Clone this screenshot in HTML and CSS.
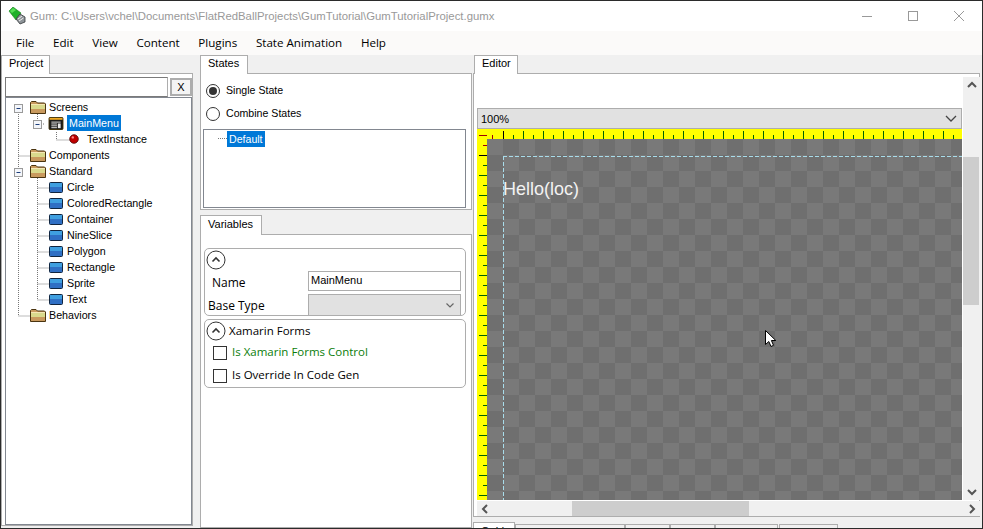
FILE: index.html
```html
<!DOCTYPE html>
<html>
<head>
    <title>Gum</title>
    <link rel="stylesheet" href="styles.css">
</head>
<body>
<svg class="defs" width="0" height="0">
    <symbol id="folder" viewBox="0 0 16 13">
        <path d="M.5 12.5V1.5L1.5.5H6L7.5 2H14.5L15.500 3V12.500Z" fill="#c99a5e" stroke="#4a3410"/>
        <rect x="1" y="4" width="14" height="4" fill="#d9d98c"/>
        <rect x="1" y="3" width="14" height="1" fill="#f5e7b5"/>
    </symbol>
    <symbol id="comp" viewBox="0 0 14 11">
        <rect x=".5" y=".5" width="13" height="10" rx="1" fill="#2f6fc4" stroke="#10253f"/>
        <rect x="1" y="1" width="12" height="4" fill="#3f9fe0"/>
    </symbol>
</svg>
<div class="window">
    <header class="titlebar">
        <svg class="appicon" width="18" height="18" viewBox="0 0 18 18">
            <path d="M1 4L5 0L13 6L8 13Z" fill="#1fb02a" stroke="#12801a" stroke-width=".6"/>
            <path d="M2 4L5 1L8 3L4 6Z" fill="#55dd55"/>
            <path d="M8 12L12 7L17 10V15L12 17Z" fill="#8e9499" stroke="#33373a" stroke-width=".8"/>
            <path d="M10 12L14 9M11 14L15.500 11" stroke="#eee"/>
        </svg>
        <span class="apptitle">Gum: C:\Users\vchel\Documents\FlatRedBallProjects\GumTutorial\GumTutorialProject.gumx</span>
        <div class="winbtns">
            <svg width="46" height="30" viewBox="0 0 46 30"><path d="M18 15.500H28" stroke="#999"/></svg>
            <svg width="46" height="30" viewBox="0 0 46 30"><rect x="18.500" y="10.500" width="9" height="9" fill="none" stroke="#999"/></svg>
            <svg width="46" height="30" viewBox="0 0 46 30"><path d="M18 10L28 20M28 10L18 20" stroke="#999" fill="none"/></svg>
        </div>
    </header>
    <nav class="menubar">
        <span>File</span><span>Edit</span><span>View</span><span>Content</span><span>Plugins</span><span>State Animation</span><span>Help</span>
    </nav>
    <main class="workspace">
        <section class="col col-project">
            <div class="tabs"><div class="tab tab-project">Project</div></div>
            <div class="panel project-panel">
                <div class="searchrow">
                    <div class="searchbox"></div>
                    <div class="xbtn">X</div>
                </div>
                <div class="tree">
                    <svg class="treelines" width="80" height="230" viewBox="0 0 80 230">
                        <path d="M12.500 10V218M12.500 218H24M12.500 58H24M31.500 16V22M35 26H38M50.500 34V42H64" class="dots"/>
                        <path d="M31.500 78V202M31.500 90H44M31.500 106H44M31.500 122H44M31.500 138H44M31.500 154H44M31.500 170H44M31.500 186H44M31.500 202H44" class="dots"/>
                        <g class="expander">
                            <rect x="8.500" y="6.500" width="8" height="8"/><path d="M10.500 10.500H14.500"/>
                            <rect x="8.500" y="70.500" width="8" height="8"/><path d="M10.500 74.500H14.500"/>
                            <rect x="27.500" y="22.500" width="8" height="8"/><path d="M29.500 26.500H33.500"/>
                        </g>
                    </svg>
                    <div class="node lvl0"><svg class="ficon"><use href="#folder"/></svg><span>Screens</span></div>
                    <div class="node lvl1">
                        <svg class="ficon" viewBox="0 0 16 14">
                            <rect x=".5" y=".5" width="15" height="13" rx="1" fill="#1c1c1c" stroke="#3a2a00"/>
                            <rect x="1" y="1" width="14" height="2" fill="#f0a820"/>
                            <path d="M3 5.500H13M3 7.500H9M3 9.500H9M3 11.500H9" stroke="#e8e8e8"/>
                            <rect x="10" y="7" width="3" height="5" fill="#e8e8e8"/>
                        </svg>
                        <span class="selected">MainMenu</span>
                    </div>
                    <div class="node lvl2">
                        <svg class="ball" width="10" height="10" viewBox="0 0 10 10">
                            <circle cx="5" cy="5" r="4.300" fill="#c00000" stroke="#4d0505" stroke-width=".8"/>
                            <circle cx="3.800" cy="3.400" r="1.200" fill="#ff8a8a"/>
                        </svg>
                        <span>TextInstance</span>
                    </div>
                    <div class="node lvl0"><svg class="ficon"><use href="#folder"/></svg><span>Components</span></div>
                    <div class="node lvl0"><svg class="ficon"><use href="#folder"/></svg><span>Standard</span></div>
                    <div class="node lvl1b"><svg class="cicon"><use href="#comp"/></svg><span>Circle</span></div>
                    <div class="node lvl1b"><svg class="cicon"><use href="#comp"/></svg><span>ColoredRectangle</span></div>
                    <div class="node lvl1b"><svg class="cicon"><use href="#comp"/></svg><span>Container</span></div>
                    <div class="node lvl1b"><svg class="cicon"><use href="#comp"/></svg><span>NineSlice</span></div>
                    <div class="node lvl1b"><svg class="cicon"><use href="#comp"/></svg><span>Polygon</span></div>
                    <div class="node lvl1b"><svg class="cicon"><use href="#comp"/></svg><span>Rectangle</span></div>
                    <div class="node lvl1b"><svg class="cicon"><use href="#comp"/></svg><span>Sprite</span></div>
                    <div class="node lvl1b"><svg class="cicon"><use href="#comp"/></svg><span>Text</span></div>
                    <div class="node lvl0"><svg class="ficon"><use href="#folder"/></svg><span>Behaviors</span></div>
                </div>
            </div>
        </section>

        <section class="col col-middle">
            <div class="tabs"><div class="tab tab-states">States</div></div>
            <div class="panel states-panel">
                <label class="radio"><i class="dot on"></i>Single State</label>
                <label class="radio"><i class="dot"></i>Combine States</label>
                <div class="statetree">
                    <i class="statedots"></i><span class="selected">Default</span>
                </div>
            </div>
            <div class="tabs tabs-vars"><div class="tab tab-vars">Variables</div></div>
            <div class="panel vars-panel">
                <div class="group group-main">
                    <div class="collapse"><svg class="chev" width="20" height="20" viewBox="0 0 20 20"><circle cx="10" cy="10" r="9" fill="none" stroke="#333"/><path d="M6.500 11.500L10 8L13.500 11.500" fill="none" stroke="#333" stroke-width="1.600"/></svg></div>
                    <div class="field field-name"><span>Name</span><div class="input">MainMenu</div></div>
                    <div class="field field-base"><span>Base Type</span><div class="combo"><svg width="8" height="5" viewBox="0 0 8 5"><path d="M.5 .5L4 4L7.500 .5" fill="none" stroke="#666" stroke-width="1.200"/></svg></div></div>
                </div>
                <div class="group group-forms">
                    <div class="collapse"><svg class="chev" width="20" height="20" viewBox="0 0 20 20"><circle cx="10" cy="10" r="9" fill="none" stroke="#333"/><path d="M6.500 11.500L10 8L13.500 11.500" fill="none" stroke="#333" stroke-width="1.600"/></svg><span>Xamarin Forms</span></div>
                    <label class="check green"><i></i>Is Xamarin Forms Control</label>
                    <label class="check"><i></i>Is Override In Code Gen</label>
                </div>
            </div>
        </section>

        <section class="col col-editor">
            <div class="tabs"><div class="tab tab-editor">Editor</div></div>
            <div class="panel editor-panel">
                <div class="editor-grid">
                    <div class="editor-main">
                        <div class="zoombar"><span>100%</span><svg width="12" height="7" viewBox="0 0 12 7"><path d="M1 1L6 6L11 1" fill="none" stroke="#444" stroke-width="1.300"/></svg></div>
                        <div class="rulertop"></div>
                        <div class="canvasrow">
                            <div class="rulerleft"></div>
                            <div class="canvas">
                                <div class="bounds"></div>
                                <div class="hello">Hello(loc)</div>
                                <svg class="cursor" width="14" height="20" viewBox="0 0 14 20"><path d="M1.500 1.500V15.500L4.800 12.500L7 17.500L9.500 16.300L7.400 11.500H11.800Z" fill="#fff" stroke="#000"/></svg>
                            </div>
                        </div>
                    </div>
                    <div class="vscroll">
                        <svg width="16" height="16" viewBox="0 0 16 16"><path d="M4 10L8 6L12 10" fill="none" stroke="#555" stroke-width="2"/></svg>
                        <div class="vtrack"><div class="vthumb"></div></div>
                        <svg width="16" height="16" viewBox="0 0 16 16"><path d="M4 6L8 10L12 6" fill="none" stroke="#555" stroke-width="2"/></svg>
                    </div>
                    <div class="hscroll">
                        <svg width="16" height="16" viewBox="0 0 16 16"><path d="M10 4L6 8L10 12" fill="none" stroke="#555" stroke-width="2"/></svg>
                        <div class="htrack"><div class="hthumb"></div></div>
                        <svg width="16" height="16" viewBox="0 0 16 16"><path d="M6 4L10 8L6 12" fill="none" stroke="#555" stroke-width="2"/></svg>
                    </div>
                </div>
            </div>
            <div class="bottomtabs">
                <div class="btab btab-on">Guides</div>
                <div class="btab btab-a"></div>
                <div class="btab btab-b"></div>
                <div class="btab btab-b"></div>
                <div class="btab btab-c"></div>
                <div class="btab btab-d"></div>
            </div>
        </section>
    </main>
</div>
</body>
</html>
```

FILE: styles.css
```css
* {
    box-sizing: border-box;
}

html, body {
    margin: 0;
    padding: 0;
    background-color: #f0f0f0;
}

body {
    font-family: "Liberation Sans", Arial, sans-serif;
    font-size: 11px;
    color: #000;
}

.defs {
    display: block;
    height: 0;
}

.window {
    width: 983px;
    height: 529px;
    border: 1px solid #2b2b2b;
    overflow: hidden;
    display: flex;
    flex-direction: column;
    background-color: #f0f0f0;
}

.titlebar {
    height: 30px;
    background-color: #fff;
    display: flex;
    align-items: center;
    flex-shrink: 0;
}

.appicon {
    margin-left: 7px;
}

.apptitle {
    margin-left: 4px;
    color: #999;
    font-size: 11.35px;
    white-space: nowrap;
    flex: 1;
}

.winbtns {
    display: flex;
    height: 30px;
}

.winbtns svg {
    display: block;
}

.menubar {
    height: 24px;
    background-color: #fbfaf9;
    display: flex;
    align-items: center;
    padding: 0 0 2px 15px;
    gap: 18.7px;
    flex-shrink: 0;
    font-family: "Open Sans", sans-serif;
    font-size: 11.6px;
}

.workspace {
    flex: 1;
    display: grid;
    grid-template-columns: 191px 281px 1fr;
    min-height: 0;
}

.col {
    display: flex;
    flex-direction: column;
    min-width: 0;
    min-height: 0;
}

.tabs {
    height: 18px;
    display: flex;
    flex-shrink: 0;
}

.tab {
    height: 19px;
    background-color: #fff;
    border: 1px solid #adadad;
    border-bottom: none;
    padding: 0 0 0 7px;
    line-height: 15px;
    position: relative;
    z-index: 1;
}

.panel {
    background-color: #fff;
    border: 1px solid #adadad;
}

/* project column */
.tab-project {
    width: 49px;
}

.project-panel {
    height: 453px;
    padding: 3px 0 0 3px;
    width: 192px;
}

.searchrow {
    display: flex;
    height: 20px;
}

.searchbox {
    width: 163px;
    height: 20px;
    border: 1px solid #7a7a7a;
    border-right-color: #adadad;
}

.xbtn {
    width: 22px;
    height: 18px;
    margin: 1px 0 0 2px;
    border: 2px solid #adadad;
    background-color: #f4f4f4;
    text-align: center;
    line-height: 14px;
}

.tree {
    position: relative;
    width: 187px;
    height: 428px;
    border: 1px solid #828790;
    padding-top: 1px;
    font-size: 10.7px;
}

.treelines {
    position: absolute;
    left: 0;
    top: 0;
}

.dots {
    fill: none;
    stroke: #777;
    stroke-dasharray: 1 1;
}

.expander rect {
    fill: #f4f6fa;
    stroke: #9a9a9a;
}

.expander path {
    stroke: #1c3d7a;
}

.node {
    position: relative;
    height: 16px;
    display: flex;
    align-items: center;
    white-space: nowrap;
}

.ficon {
    width: 16px;
    height: 13px;
    flex-shrink: 0;
}

.cicon {
    width: 14px;
    height: 11px;
    flex-shrink: 0;
}

.lvl0 {
    padding-left: 24px;
}

.lvl0 span {
    margin-left: 3px;
}

.lvl1 {
    padding-left: 42px;
}

.lvl1 span {
    margin-left: 3px;
}

.lvl2 {
    padding-left: 63px;
}

.lvl2 span {
    margin-left: 8px;
}

.lvl1b {
    padding-left: 43px;
}

.lvl1b span {
    margin-left: 4px;
}

.selected {
    background-color: #0078d7;
    color: #fff;
    padding: 0 2px;
    height: 16px;
    line-height: 16px;
    display: inline-block;
}

/* middle column */
.col-middle {
    padding-left: 8px;
    padding-right: 1px;
}

.tab-states {
    width: 48px;
}

.states-panel {
    height: 137px;
    padding: 4px 5px 0 2px;
}

.radio {
    display: flex;
    align-items: center;
    height: 23px;
    padding-left: 3px;
    font-size: 10.6px;
}

.dot {
    width: 14px;
    height: 14px;
    margin-top: 2px;
    border: 1px solid #333;
    border-radius: 50%;
    margin-right: 6px;
    background-color: #fff;
    display: flex;
    align-items: center;
    justify-content: center;
}

.dot.on::after {
    content: "";
    width: 8px;
    height: 8px;
    background-color: #333;
    border-radius: 50%;
}

.statetree {
    height: 79px;
    margin-top: 5px;
    border: 1px solid #828790;
    display: flex;
    align-items: flex-start;
    padding: 1px 0 0 14px;
    font-size: 10.6px;
}

.statedots {
    width: 9px;
    height: 8px;
    border-bottom: 1px dotted #777;
}

.tabs-vars {
    margin-top: 5px;
    height: 19px;
}

.tab-vars {
    width: 62px;
    height: 20px;
    line-height: 17px;
}

.vars-panel {
    flex: 1;
    padding: 13px 5px 0 3px;
    font-family: "Open Sans", sans-serif;
    font-size: 11.5px;
}

.group {
    border: 1px solid #adadad;
    border-radius: 5px;
}

.group-main {
    height: 68px;
    padding: 1px;
}

.group-forms {
    height: 69px;
    margin-top: 3px;
    padding: 1px;
}

.collapse {
    height: 20px;
    display: flex;
    align-items: center;
}

.chev {
    flex-shrink: 0;
}

.collapse span {
    margin-left: 3px;
    padding-bottom: 2px;
}

.field {
    display: flex;
    align-items: center;
}

.field span {
    display: block;
    font-size: 12px;
}

.field-name {
    height: 21px;
    padding-left: 6px;
}

.field-name span {
    width: 96px;
    padding-top: 3px;
}

.field-base {
    height: 22px;
    padding-left: 2px;
    margin-top: 3px;
}

.field-base span {
    width: 100px;
}

.input {
    width: 153px;
    height: 20px;
    border: 1px solid #adadad;
    padding-left: 2px;
    line-height: 17px;
    font-family: "Liberation Sans", sans-serif;
    font-size: 11px;
}

.combo {
    width: 153px;
    height: 22px;
    background-color: #e1e1e1;
    border: 1px solid #adadad;
    display: flex;
    align-items: center;
    justify-content: flex-end;
    padding-right: 6px;
}

.check {
    display: flex;
    align-items: center;
    height: 23px;
    padding: 0 0 2px 7px;
}

.check i {
    width: 14px;
    height: 14px;
    margin-top: 2px;
    border: 1px solid #333;
    margin-right: 5px;
    background-color: #fff;
}

.green {
    color: #0a7d0a;
}

/* editor column */
.tab-editor {
    width: 44px;
    margin-left: 1px;
}

.editor-panel {
    width: 507px;
    height: 445px;
    padding: 3px 0 0 3px;
}

.editor-grid {
    display: grid;
    grid-template-columns: 485px 17px;
    grid-template-rows: 423px 16px;
    column-gap: 1px;
}

.editor-main {
    padding-top: 31px;
    min-height: 0;
    overflow: hidden;
}

.zoombar {
    height: 21px;
    background-color: #e1e1e1;
    border: 1px solid #adadad;
    display: flex;
    align-items: center;
    justify-content: space-between;
    padding: 0 4px 0 3px;
}

.rulertop {
    height: 10px;
    background-color: #ff0;
    background-image:
        linear-gradient(to right, #000, #000),
        repeating-linear-gradient(to right, #006400 0 1px, transparent 1px 20px),
        repeating-linear-gradient(to right, #006400 0 1px, transparent 1px 20px),
        linear-gradient(to right, #a00000, #a00000),
        linear-gradient(to right, #a00000, #a00000);
    background-size: 1px 8px, 500px 8px, 500px 4px, 1px 4px, 8px 1px;
    background-position: 26px bottom, 46px bottom, 36px bottom, 15px bottom, 2px 6px;
    background-repeat: no-repeat;
}

.canvasrow {
    display: flex;
    height: 361px;
}

.rulerleft {
    width: 10px;
    background-color: #ff0;
    background-image:
        linear-gradient(#000, #000),
        repeating-linear-gradient(to bottom, #006400 0 1px, transparent 1px 20px),
        repeating-linear-gradient(to bottom, #006400 0 1px, transparent 1px 20px),
        linear-gradient(#a00000, #a00000);
    background-size: 8px 1px, 8px 400px, 4px 400px, 4px 1px;
    background-position: right 16px, right 36px, right 26px, right 6px;
    background-repeat: no-repeat;
    flex-shrink: 0;
}

.canvas {
    position: relative;
    flex: 1;
    overflow: hidden;
    background-color: #797979;
    background-image: conic-gradient(#6f6f6f 25%, #797979 0 50%, #6f6f6f 0 75%, #797979 0);
    background-size: 32px 32px;
}

.bounds {
    position: absolute;
    left: 16px;
    top: 17px;
    right: 0;
    bottom: 0;
    background-image:
        repeating-linear-gradient(to right, #a8dcea 0 4px, transparent 4px 6px),
        repeating-linear-gradient(to bottom, #a8dcea 0 4px, transparent 4px 6px);
    background-size: 100% 1px, 1px 100%;
    background-position: 0 0, 0 0;
    background-repeat: no-repeat;
}

.hello {
    position: absolute;
    left: 16px;
    top: 40px;
    font-size: 18px;
    line-height: 21px;
    color: #f2f2f2;
}

.cursor {
    position: absolute;
    left: 277px;
    top: 190px;
}

.vscroll {
    background-color: #f0f0f0;
    display: flex;
    flex-direction: column;
    align-items: center;
}

.vscroll svg, .hscroll svg {
    display: block;
    flex-shrink: 0;
}

.vtrack {
    flex: 1;
    width: 100%;
    padding-top: 64px;
}

.vthumb {
    width: 16px;
    height: 148px;
    background-color: #cdcdcd;
}

.hscroll {
    grid-column: 1 / 3;
    background-color: #f0f0f0;
    display: flex;
    align-items: center;
    margin-top: 1px;
}

.htrack {
    flex: 1;
    padding-left: 79px;
}

.hthumb {
    width: 177px;
    height: 15px;
    background-color: #cdcdcd;
}

.bottomtabs {
    display: flex;
    height: 30px;
    margin-top: 5px;
}

.btab {
    height: 20px;
    margin-top: 2px;
    border: 1px solid #adadad;
    background-color: #f0f0f0;
}

.btab-on {
    width: 42px;
    margin-top: 0;
    background-color: #fff;
    padding: 1px 0 0 7px;
    line-height: 14px;
}

.btab-a {
    width: 110px;
}

.btab-b {
    width: 45px;
}

.btab-c {
    width: 63px;
}

.btab-d {
    width: 59px;
    margin-left: 1px;
}
```
